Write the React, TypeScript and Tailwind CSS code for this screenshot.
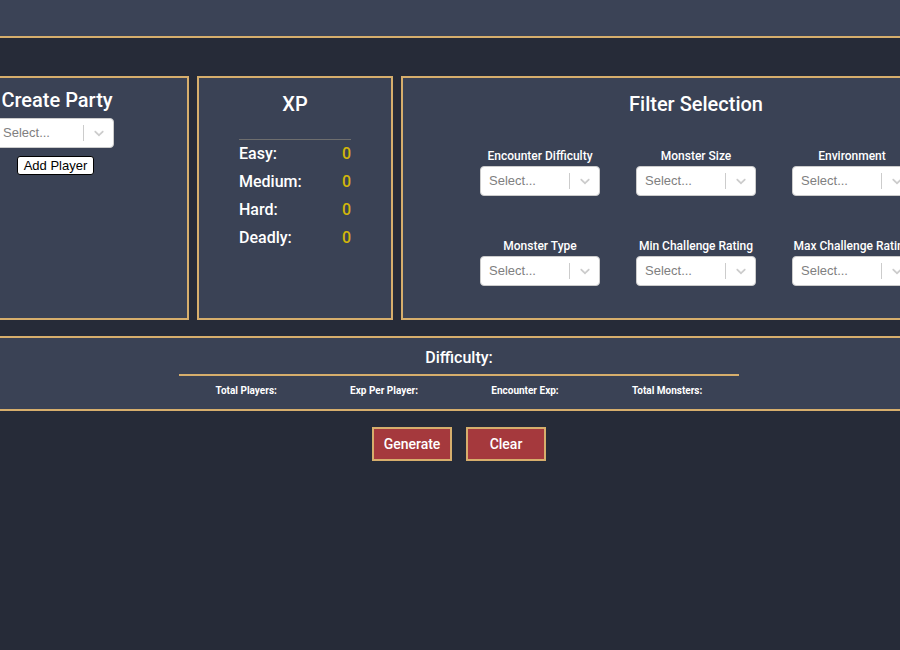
import React from "react";

const filters = [
  "Encounter Difficulty",
  "Monster Size",
  "Environment",
  "Monster Type",
  "Min Challenge Rating",
  "Max Challenge Rating",
];

const xpRows = ["Easy:", "Medium:", "Hard:", "Deadly:"];

const summary = ["Total Players:", "Exp Per Player:", "Encounter Exp:", "Total Monsters:"];

function Select() {
  return (
    <div className="flex h-[30px] w-[120px] items-center rounded-[4px] border border-[#cccccc] bg-white">
      <span className="flex-1 pl-[8px] font-['Liberation_Sans',sans-serif] text-[13px] text-[#808080]">
        Select...
      </span>
      <span className="h-[16px] w-px bg-[#cccccc]" />
      <span className="flex w-[29px] justify-center">
        <svg width="16" height="16" viewBox="0 0 20 20" fill="#cccccc">
          <path d="M4.516 7.548c0.436-0.446 1.043-0.481 1.576 0l3.908 3.747 3.908-3.747c0.533-0.481 1.141-0.446 1.574 0 0.436 0.445 0.408 1.197 0 1.615-0.406 0.418-4.695 4.502-4.695 4.502-0.217 0.223-0.502 0.335-0.787 0.335s-0.57-0.112-0.789-0.335c0 0-4.287-4.084-4.695-4.502s-0.436-1.17 0-1.615z" />
        </svg>
      </span>
    </div>
  );
}

export default function App() {
  return (
    <div className="min-h-[650px] w-full overflow-hidden bg-[#262b38] font-['Roboto',sans-serif] text-white">
      <div className="w-[918px]">
        <header className="h-[38px] border-b-2 border-[#d6ae6c] bg-[#3b4356]" />

        <div className="mt-[38px] flex justify-center gap-2">
          <section className="flex h-[244px] w-[264px] shrink-0 flex-col items-center border-2 border-[#d6ae6c] bg-[#3a4255] pt-[10px]">
            <h2 className="text-[20px] leading-6 font-medium">Create Party</h2>
            <div className="mt-[6px] mr-[6px]">
              <Select />
            </div>
            <button className="mt-[8px] mr-[3px] rounded-[3px] border border-black bg-white px-[6px] font-['Liberation_Sans',sans-serif] text-[13px] leading-[17px] text-black">
              Add Player
            </button>
          </section>

          <section className="flex h-[244px] w-[196px] shrink-0 flex-col items-center border-2 border-[#d6ae6c] bg-[#3a4255] pt-[14px]">
            <h2 className="text-[20px] leading-6 font-medium">XP</h2>
            <div className="mt-[23px] w-[112px] border-t border-[#6e6e6e]">
              {xpRows.map((r) => (
                <div key={r} className="flex h-7 items-center justify-between text-[16px] font-medium">
                  <span>{r}</span>
                  <span className="text-[#d2b60a]">0</span>
                </div>
              ))}
            </div>
          </section>

          <section className="flex h-[244px] w-[592px] shrink-0 flex-col items-center border-2 border-[#d6ae6c] bg-[#3a4255] pt-[14px] pr-[2px]">
            <h2 className="text-[20px] leading-6 font-medium">Filter Selection</h2>
            <div className="mt-[32px] grid grid-cols-[120px_120px_120px] gap-x-9 gap-y-[42px]">
              {filters.map((f) => (
                <div key={f} className="flex flex-col items-center">
                  <span className="h-4 whitespace-nowrap text-[12px] leading-4 font-medium">{f}</span>
                  <div className="mt-[2px]">
                    <Select />
                  </div>
                </div>
              ))}
            </div>
          </section>
        </div>

        <section className="mt-4 flex flex-col items-center border-y-2 border-[#d6ae6c] bg-[#3a4255] pt-[10px] pb-[12px]">
          <h3 className="text-[16px] leading-5 font-medium">Difficulty:</h3>
          <div className="mt-[6px] h-[2px] w-[560px] bg-[#d6ae6c]" />
          <div className="mt-[9px] flex w-[560px] justify-around">
            {summary.map((s) => (
              <span key={s} className="text-[10px] leading-3 font-bold">
                {s}
              </span>
            ))}
          </div>
        </section>

        <div className="mt-4 flex justify-center gap-[14px]">
          <button className="h-[34px] w-[80px] border-2 border-[#d6ae6c] bg-[#a5393d] text-[14px] font-medium text-white">
            Generate
          </button>
          <button className="h-[34px] w-[80px] border-2 border-[#d6ae6c] bg-[#a5393d] text-[14px] font-medium text-white">
            Clear
          </button>
        </div>
      </div>
    </div>
  );
}
